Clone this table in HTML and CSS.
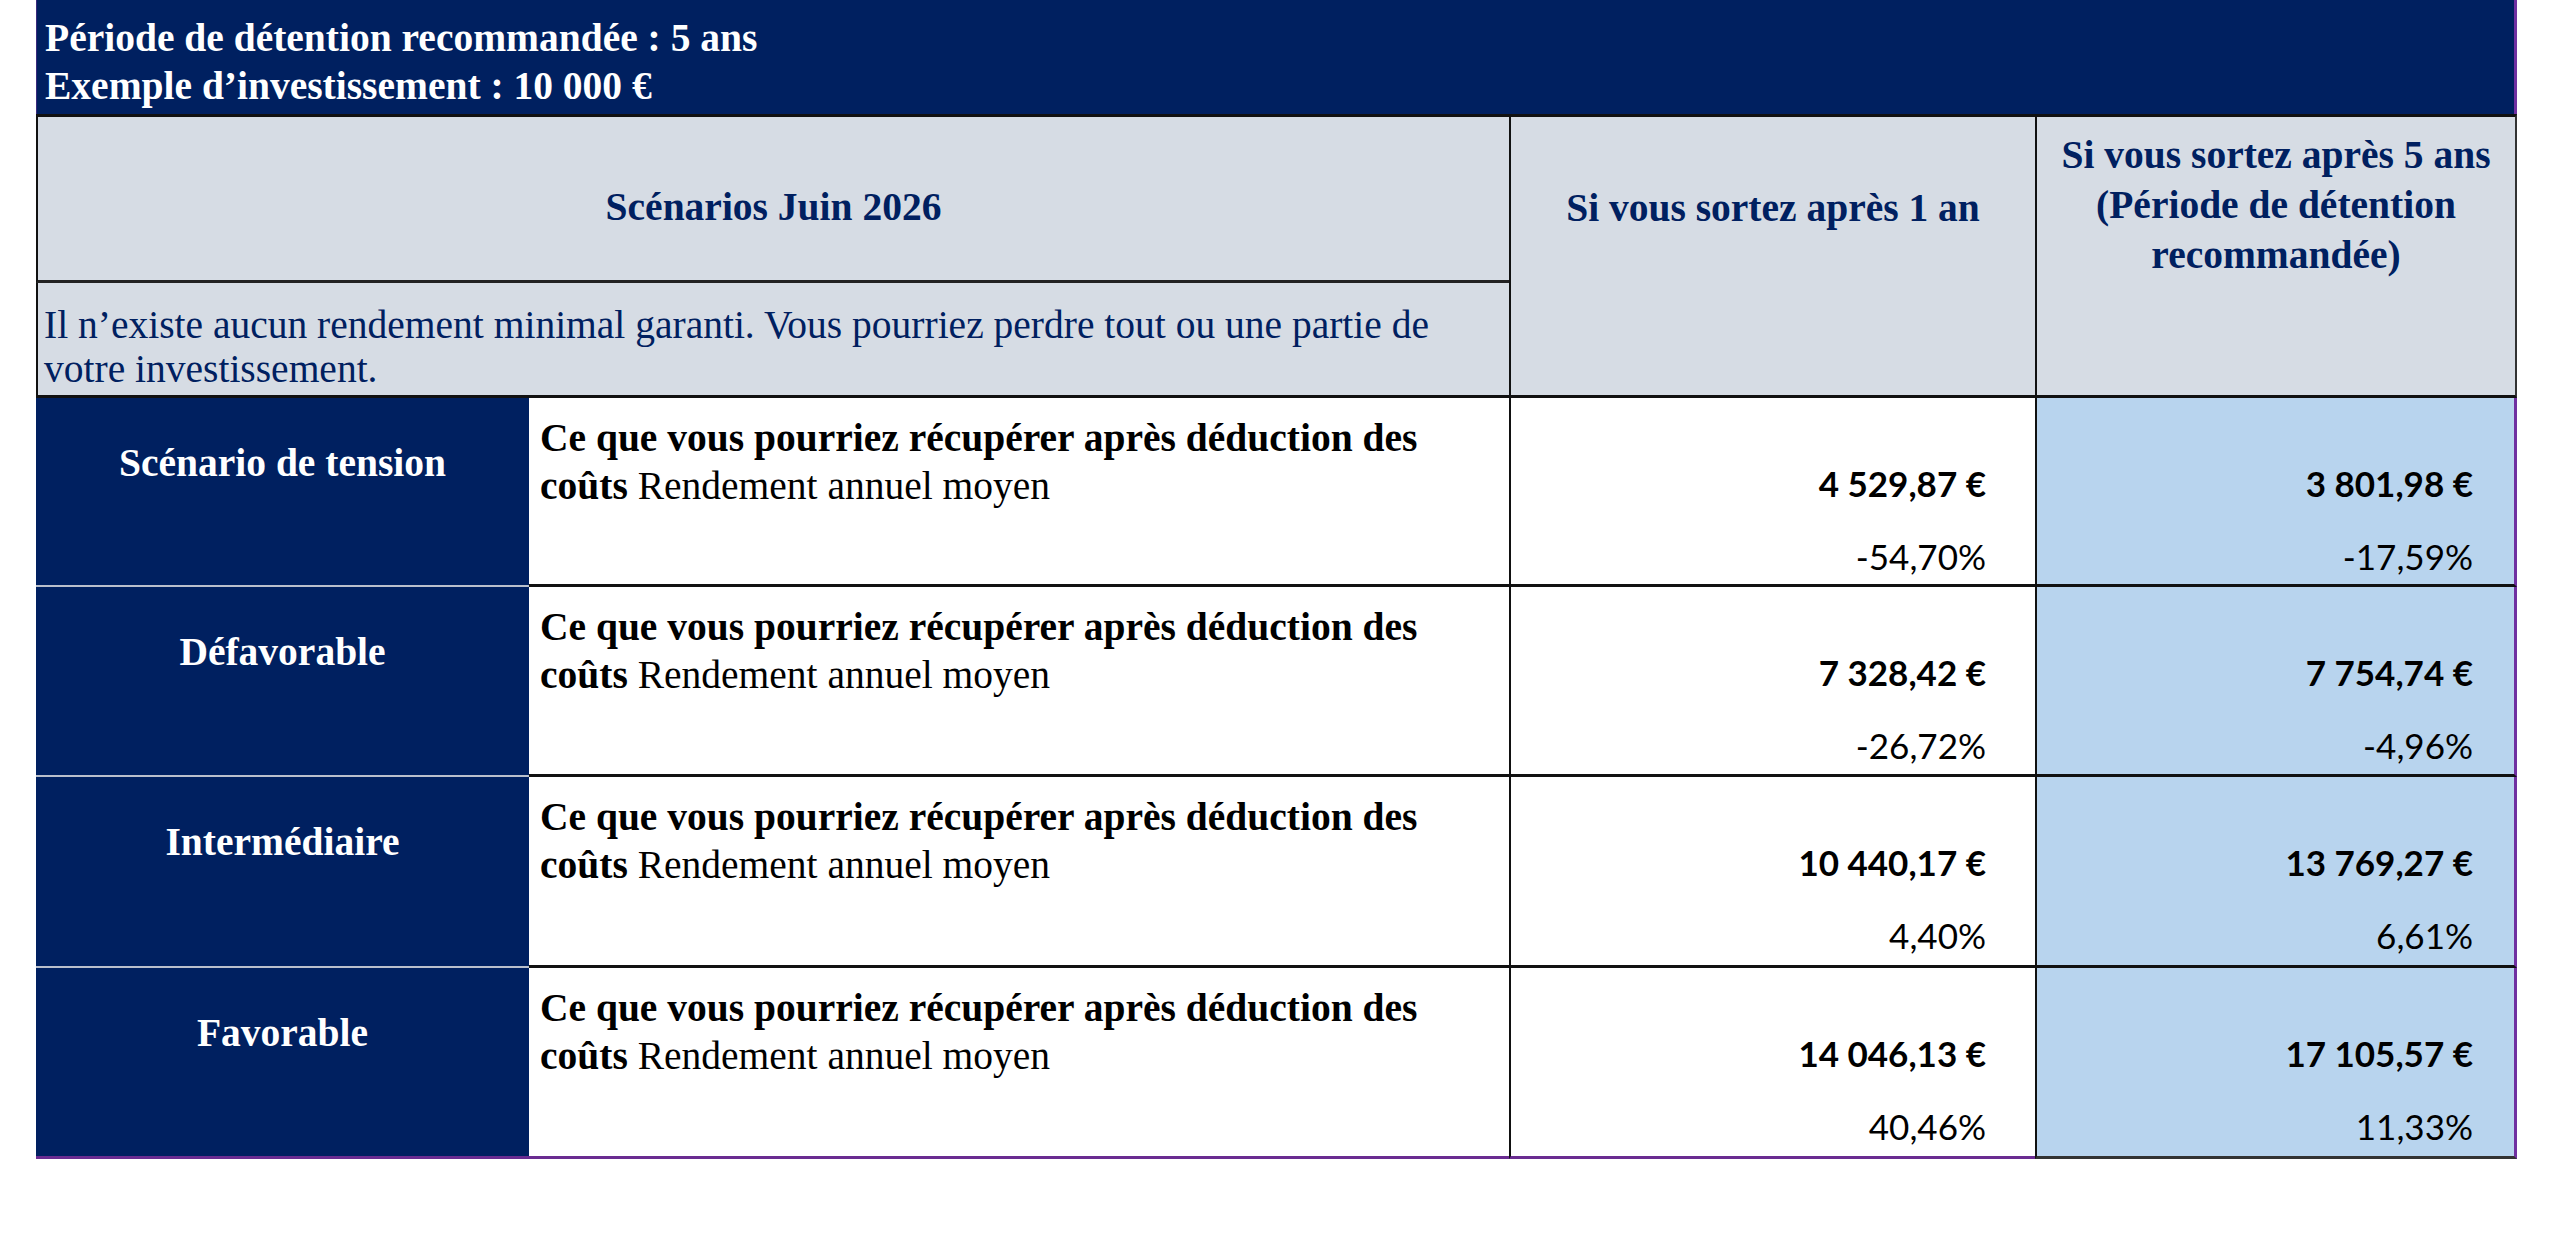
FILE: index.html
```html
<!DOCTYPE html>
<html lang="fr">
<head>
<meta charset="utf-8">
<title>Scénarios de performance</title>
<link rel="stylesheet" href="styles.css">
</head>
<body>
<div class="sheet">
  <div class="banner">
    <div>Période de détention recommandée : 5 ans</div>
    <div>Exemple d’investissement : 10 000 €</div>
  </div>
  <div class="grid">
    <div class="h-scen">Scénarios Juin 2026</div>
    <div class="h-col h-1an"><div class="hcap">Si vous sortez après 1 an</div></div>
    <div class="h-col h-5ans"><div class="hcap hcap-3">Si vous sortez après 5 ans<br>(Période de détention<br>recommandée)</div></div>
    <div class="h-desc">Il n’existe aucun rendement minimal garanti. Vous pourriez perdre tout ou une partie de votre investissement.</div>

    <div class="label">Scénario de tension</div>
    <div class="desc"><b>Ce que vous pourriez récupérer après déduction des</b> <b>coûts</b> Rendement annuel moyen</div>
    <div class="num num-1"><div class="amt">4 529,87 €</div><div class="pct">-54,70%</div></div>
    <div class="num num-5"><div class="amt">3 801,98 €</div><div class="pct">-17,59%</div></div>

    <div class="label">Défavorable</div>
    <div class="desc"><b>Ce que vous pourriez récupérer après déduction des</b> <b>coûts</b> Rendement annuel moyen</div>
    <div class="num num-1"><div class="amt">7 328,42 €</div><div class="pct">-26,72%</div></div>
    <div class="num num-5"><div class="amt">7 754,74 €</div><div class="pct">-4,96%</div></div>

    <div class="label">Intermédiaire</div>
    <div class="desc"><b>Ce que vous pourriez récupérer après déduction des</b> <b>coûts</b> Rendement annuel moyen</div>
    <div class="num num-1"><div class="amt">10 440,17 €</div><div class="pct">4,40%</div></div>
    <div class="num num-5"><div class="amt">13 769,27 €</div><div class="pct">6,61%</div></div>

    <div class="label last">Favorable</div>
    <div class="desc last"><b>Ce que vous pourriez récupérer après déduction des</b> <b>coûts</b> Rendement annuel moyen</div>
    <div class="num num-1 last"><div class="amt">14 046,13 €</div><div class="pct">40,46%</div></div>
    <div class="num num-5 last"><div class="amt">17 105,57 €</div><div class="pct">11,33%</div></div>
  </div>
</div>
</body>
</html>
```

FILE: styles.css
```css
html, body {
  margin: 0;
  padding: 0;
  background: #ffffff;
}

.sheet {
  margin-left: 36px;
  width: 2481px;
  font-family: "Liberation Serif", "Times New Roman", serif;
  font-size: 39.5px;
}

.banner {
  box-sizing: border-box;
  height: 114px;
  padding: 14px 8px 0 8px;
  background: #002060;
  color: #ffffff;
  font-weight: bold;
  line-height: 48px;
  border-right: 3px solid #7030a0;
  border-left: 1px solid #3a2a7c;
}

.grid {
  display: grid;
  grid-template-columns: 493px 980px 526px 482px;
  grid-template-rows: 169px 115px 189px 190px 191px 191px;
}

.grid > div {
  box-sizing: border-box;
}

/* header */
.h-scen {
  grid-column: 1 / 3;
  grid-row: 1;
  background: #d6dce4;
  color: #002060;
  font-weight: bold;
  border-top: 3px solid #111111;
  border-left: 2px solid #111111;
  border-bottom: 3px solid #222222;
  display: flex;
  align-items: center;
  justify-content: center;
  padding-top: 16px;
  line-height: 48px;
}

.h-desc {
  grid-column: 1 / 3;
  grid-row: 2;
  background: #d6dce4;
  color: #002060;
  border-left: 2px solid #111111;
  border-bottom: 3px solid #111111;
  padding: 20px 20px 0 6px;
  line-height: 44px;
}

.h-col {
  grid-row: 1 / 3;
  background: #d6dce4;
  color: #002060;
  font-weight: bold;
  border-top: 3px solid #111111;
  border-left: 2px solid #111111;
  border-bottom: 3px solid #111111;
  text-align: center;
}

.h-5ans {
  border-right: 2px solid #333333;
}

.hcap {
  height: 166px;
  display: flex;
  align-items: center;
  justify-content: center;
  padding-top: 16px;
  box-sizing: border-box;
  line-height: 48px;
}

.hcap-3 {
  line-height: 50px;
  padding-top: 10px;
}

/* body */
.label {
  background: #002060;
  color: #ffffff;
  font-weight: bold;
  text-align: center;
  line-height: 48px;
  padding-top: 41px;
  border-bottom: 2px solid #b9bfcc;
}

.desc {
  background: #ffffff;
  color: #000000;
  line-height: 48px;
  padding: 16px 10px 0 11px;
  border-bottom: 3px solid #111111;
}

.desc b {
  font-weight: bold;
}

.num {
  font-family: Lato, "Open Sans", sans-serif;
  font-size: 35px;
  color: #000000;
  text-align: right;
  border-left: 2px solid #111111;
  border-bottom: 3px solid #111111;
  padding-top: 64px;
}

.num-1 {
  background: #ffffff;
  padding-right: 49px;
}

.num-5 {
  background: #b8d4ee;
  border-right: 3px solid #7030a0;
  padding-right: 41px;
}

.amt {
  font-weight: bold;
  line-height: 42px;
}

.pct {
  font-weight: normal;
  line-height: 42px;
  margin-top: 31px;
}

.label.last,
.desc.last,
.num-1.last {
  border-bottom: 3px solid #6a2c91;
}

.num-5.last {
  border-bottom: 3px solid #333333;
}
```
